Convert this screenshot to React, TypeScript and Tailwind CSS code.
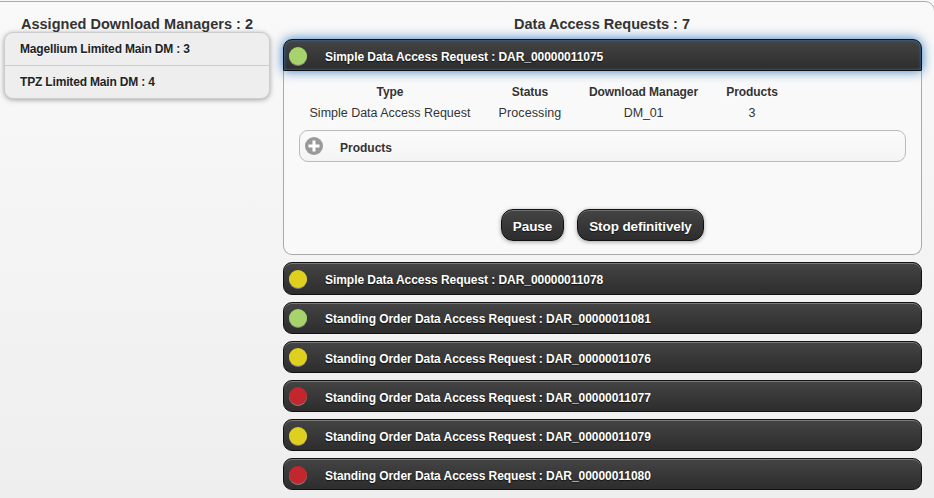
const managers = ['Magellium Limited Main DM : 3', 'TPZ Limited Main DM : 4'];

const columns = [
  { title: 'Type', value: 'Simple Data Access Request', width: 'w-[182px]', body: 'tracking-[-0.01px]' },
  { title: 'Status', value: 'Processing', width: 'w-[98px]', body: 'tracking-[0.1px]' },
  { title: 'Download Manager', value: 'DM_01', width: 'w-[129px]', body: 'tracking-[-0.2px]' },
  { title: 'Products', value: '3', width: 'w-[88px]', body: 'tracking-normal' },
];

const requests = [
  { name: 'Simple Data Access Request : DAR_00000011078', color: 'bg-[#dfd020]', size: 'h-[33px]', pad: 'pt-[2px]' },
  { name: 'Standing Order Data Access Request : DAR_00000011081', color: 'bg-[#a6d36c]', size: 'h-8', pad: 'pt-[2px]' },
  { name: 'Standing Order Data Access Request : DAR_00000011076', color: 'bg-[#dfd020]', size: 'h-8', pad: 'pt-[4px]' },
  { name: 'Standing Order Data Access Request : DAR_00000011077', color: 'bg-[#c1272d]', size: 'h-8', pad: 'pt-[4px]' },
  { name: 'Standing Order Data Access Request : DAR_00000011079', color: 'bg-[#dfd020]', size: 'h-8 pt-[2px]', pad: 'pt-[2px]' },
  { name: 'Standing Order Data Access Request : DAR_00000011080', color: 'bg-[#c1272d]', size: 'h-8 pt-[2px]', pad: 'pt-[2px]' },
];

const dark =
  'border border-[#111] bg-linear-to-b from-[#444] to-[#2d2d2d] font-bold text-white [text-shadow:0_1px_1px_#111]';

function RequestTitle({ name, color, pad }: { name: string; color: string; pad: string }) {
  return (
    <>
      <span className={`h-[18px] w-[18px] shrink-0 rounded-full shadow-[0_1px_0_rgba(255,255,255,0.4)] ${color}`} />
      <span className={`ml-[18px] text-[12px] leading-4 tracking-[-0.05px] whitespace-nowrap ${pad}`}>{name}</span>
    </>
  );
}

export default function App() {
  return (
    <div className="h-[498px] w-[934px] overflow-hidden bg-[#f9f9f9] pt-px font-['Liberation_Sans',Arial,sans-serif] text-[#333]">
      <div className="-ml-4 flex h-[510px] w-[951px] rounded-[10px] border border-[#aaa] bg-linear-to-b from-[#f9f9f9] to-[#eee] pl-[19px]">
        <aside className="w-[266px] shrink-0">
          <h2 className="mt-[14px] h-[16px] text-center text-[14.5px] leading-4 font-bold tracking-[0.03px] whitespace-nowrap">
            Assigned Download Managers : 2
          </h2>
          <ul className="h-[67px] rounded-[9px] border border-[#ccc] bg-[#eee] text-[12px] leading-4 font-bold tracking-[-0.17px] text-[#222] shadow-[0_1px_5px_rgba(0,0,0,0.35)] [text-shadow:0_1px_0_#fff]">
            {managers.map((name) => (
              <li key={name} className="flex h-[33px] border-b border-[#ccc] pt-[8px] pl-[15px] whitespace-nowrap last:border-b-0">
                {name}
              </li>
            ))}
          </ul>
        </aside>
        <main className="ml-[13px] w-[639px]">
          <h2 className="mt-[14px] h-[23px] pr-px text-center text-[14.5px] leading-4 font-bold whitespace-nowrap">
            Data Access Requests : 7
          </h2>
          <section>
            <div className={`relative flex h-8 items-center rounded-t-[9px] pt-px pl-[5px] shadow-[inset_0_0_3px_#387bbe,0_0_12px_#387bbe] ${dark}`}>
              <RequestTitle name="Simple Data Access Request : DAR_00000011075" color="bg-[#a6d36c]" pad="pt-[2px]" />
            </div>
            <div className="flex h-[184px] flex-col rounded-b-[9px] border border-t-0 border-[#aaa] bg-[#f9f9f9] px-[15px] pt-[11px] text-[12.5px] [text-shadow:0_1px_0_#fff]">
              <div className="flex text-center leading-[21px] whitespace-nowrap">
                {columns.map((column) => (
                  <div key={column.title} className={column.width}>
                    <div className="h-[21px] text-[12px] font-bold tracking-[-0.05px]">{column.title}</div>
                    <div className={column.body}>{column.value}</div>
                  </div>
                ))}
              </div>
              <div className="mt-[6px] flex h-8 shrink-0 items-center rounded-[9px] border border-[#bbb] bg-linear-to-b from-[#fbfbfb] to-[#f4f4f4] pl-[5px] font-bold">
                <svg width="18" height="18" viewBox="0 0 18 18">
                  <circle cx="9" cy="9" r="9" fill="#999" />
                  <path d="M7.5 3.5h3v4h4v3h-4v4h-3v-4h-4v-3h4z" fill="#fff" />
                </svg>
                <span className="ml-[17px] pt-[4px] text-[12px] leading-4">Products</span>
              </div>
              <div className="mt-[47px] flex justify-center gap-[13px] text-[13.5px] tracking-[-0.1px]">
                <button className={`h-8 w-[63px] rounded-xl pt-[4px] whitespace-nowrap shadow-[inset_0_1px_0_rgba(255,255,255,0.25),0_1px_4px_rgba(0,0,0,0.35)] ${dark}`}>
                  Pause
                </button>
                <button className={`h-8 w-[127px] rounded-xl pt-[4px] whitespace-nowrap shadow-[inset_0_1px_0_rgba(255,255,255,0.25),0_1px_4px_rgba(0,0,0,0.35)] ${dark}`}>
                  Stop definitively
                </button>
              </div>
            </div>
          </section>
          <div className="mt-[7px] flex flex-col gap-[7px]">
            {requests.map((request) => (
              <div
                key={request.name}
                className={`flex shrink-0 items-center rounded-[9px] pl-[5px] shadow-[inset_0_1px_0_rgba(255,255,255,0.3)] ${request.size} ${dark}`}
              >
                <RequestTitle name={request.name} color={request.color} pad={request.pad} />
              </div>
            ))}
          </div>
        </main>
      </div>
    </div>
  );
}
